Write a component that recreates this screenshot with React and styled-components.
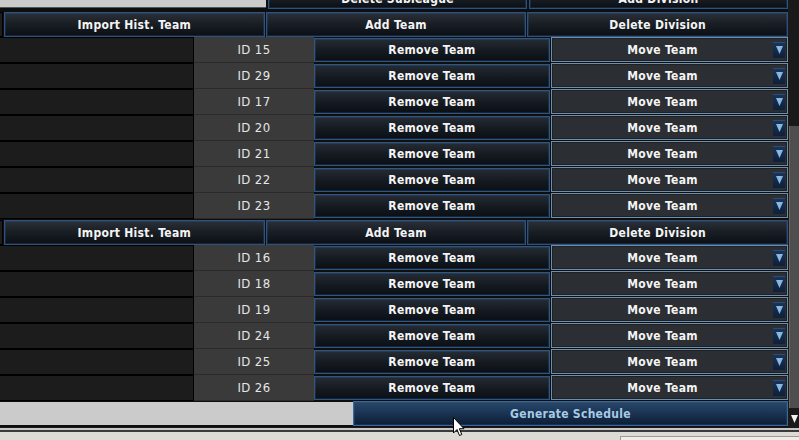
import React from 'react';
import styled, { createGlobalStyle } from 'styled-components';

const GlobalStyle = createGlobalStyle`
  html, body {
    margin: 0;
    padding: 0;
    background: #0d0e0f;
  }
  body {
    width: 799px;
    height: 440px;
    overflow: hidden;
    font-family: "DejaVu Sans Condensed", "DejaVu Sans", sans-serif;
    font-stretch: condensed;
  }
`;

const Window = styled.div`
  position: relative;
  width: 799px;
  height: 440px;
  display: flex;
  flex-direction: column;
  overflow: hidden;
`;

const Pane = styled.div`
  display: flex;
  height: 427px;
  flex-shrink: 0;
`;

// content is scrolled to the bottom, so the top overflows out of view
const Viewport = styled.div`
  width: 788px;
  display: flex;
  flex-direction: column;
  justify-content: flex-end;
  overflow: hidden;
  background: #0d0e0f;
  & > * {
    flex-shrink: 0;
  }
`;

const TopRow = styled.div`
  display: grid;
  grid-template-columns: 266px 1fr 1fr;
  column-gap: 2px;
  height: 20px;
  margin-bottom: 2px;
`;

const GrayFill = styled.div`
  background: #cbcbcb;
  border-bottom: 1px solid #555;
  margin-bottom: 1px;
`;

const HeaderRow = styled.div`
  display: grid;
  grid-template-columns: 3px 1fr 1fr 1fr;
  column-gap: 1px;
  height: 25px;
  margin-top: 1px;
`;

const Stub = styled.div`
  background: #1c1d1c;
  border: 1px solid #000;
  border-left: none;
`;

const Button = styled.div`
  display: flex;
  align-items: center;
  justify-content: center;
  box-sizing: border-box;
  border: 1px solid #2c5282;
  box-shadow: inset 0 0 0 1px rgba(60, 100, 150, 0.25);
  background: linear-gradient(to bottom, #2b3038 0%, #1a1f26 45%, #0a0f16 100%);
  color: #f4f4f4;
  font-size: 12px;
  font-weight: bold;
  letter-spacing: 0.3px;
  white-space: nowrap;
`;

const TeamRow = styled.div`
  display: grid;
  grid-template-columns: 194px 120px 236px 1fr;
  height: 26px;
`;

const NameBox = styled.div`
  background: #1b1c1b;
  border: 1px solid #000;
  border-left: none;
`;

const IdCell = styled.div`
  display: flex;
  align-items: center;
  justify-content: center;
  background: #3a3a3b;
  border-bottom: 1px solid #2a2a2b;
  color: #e6e6e6;
  font-size: 13px;
  letter-spacing: 0.4px;
`;

const RowButton = styled(Button)`
  margin: 1px 0 1px;
  border-color: #2f5680;
  background: linear-gradient(to bottom, #262c34 0%, #161b22 50%, #0a0e15 100%);
`;

const Select = styled.div`
  display: flex;
  align-items: center;
  margin: 0 0 1px 1px;
  box-sizing: border-box;
  border: 1px solid #6e8ea9;
  box-shadow: inset 0 0 0 1px #1d2024;
  background: #2b2e32;
  color: #f4f4f4;
  font-size: 12px;
  font-weight: bold;
  letter-spacing: 0.3px;
`;

const SelectLabel = styled.span`
  flex: 1;
  text-align: center;
`;

const ArrowBox = styled.span`
  display: flex;
  align-items: center;
  justify-content: center;
  box-sizing: border-box;
  width: 12px;
  height: 16px;
  margin-right: 2px;
  border-top: 1px solid #2a4c78;
  background: linear-gradient(to bottom, #1a3456, #0e1f3a);
`;

const GenerateRow = styled.div`
  display: grid;
  grid-template-columns: 353px 1fr;
  height: 26px;
`;

const GrayTail = styled.div`
  background: #cbcbcb;
  margin: 1px 0 2px;
`;

const GenerateButton = styled(Button)`
  margin-bottom: 1px;
  border-color: #3a6898;
  background: linear-gradient(to bottom, #28486b 0%, #1a3352 50%, #0c1d35 100%);
  color: #a7cbe3;
`;

const ScrollBar = styled.div`
  width: 11px;
  display: flex;
  flex-direction: column;
  background: #1a1a1a;
  padding-left: 1px;
  box-sizing: border-box;
`;

const ScrollTrack = styled.div`
  height: 126px;
`;

const ScrollThumb = styled.div`
  flex: 1;
  background: #4e4e4e;
  border-left: 1px solid #676767;
`;

const ScrollArrow = styled.div`
  height: 17px;
  display: flex;
  align-items: center;
  justify-content: center;
  padding-top: 2px;
`;

const BottomBar = styled.div`
  flex: 1;
  background: linear-gradient(to bottom, #1a1a1a 0 1px, #c6c6c6 1px 3px, #3a3a3a 3px 5px, #dcdad5 5px);
`;

const Field = styled.div`
  margin: 9px 0 0 620px;
  height: 10px;
  border-top: 1px solid #9c9a96;
  border-left: 1px solid #9c9a96;
  background: #eeece9;
`;

const Cursor = styled.svg`
  position: absolute;
  left: 453px;
  top: 417px;
`;

const DownArrow = ({ color = '#86b8e2' }) => (
  <svg width="7" height="8" viewBox="0 0 7 8">
    <path d="M0 0 H7 L3.5 8 Z" fill={color} />
  </svg>
);

const division1 = [15, 29, 17, 20, 21, 22, 23];
const division2 = [16, 18, 19, 24, 25, 26];

function DivisionHeader() {
  return (
    <HeaderRow>
      <Stub />
      <Button>Import Hist. Team</Button>
      <Button>Add Team</Button>
      <Button>Delete Division</Button>
    </HeaderRow>
  );
}

function Team({ id }) {
  return (
    <TeamRow>
      <NameBox />
      <IdCell>ID {id}</IdCell>
      <RowButton>Remove Team</RowButton>
      <Select>
        <SelectLabel>Move Team</SelectLabel>
        <ArrowBox>
          <DownArrow />
        </ArrowBox>
      </Select>
    </TeamRow>
  );
}

export default function App() {
  return (
    <Window>
      <GlobalStyle />
      <Pane>
        <Viewport>
          <TopRow>
            <GrayFill />
            <Button>Delete Subleague</Button>
            <Button>Add Division</Button>
          </TopRow>
          <DivisionHeader />
          {division1.map((id) => (
            <Team key={id} id={id} />
          ))}
          <DivisionHeader />
          {division2.map((id) => (
            <Team key={id} id={id} />
          ))}
          <GenerateRow>
            <GrayTail />
            <GenerateButton>Generate Schedule</GenerateButton>
          </GenerateRow>
        </Viewport>
        <ScrollBar>
          <ScrollTrack />
          <ScrollThumb />
          <ScrollArrow>
            <DownArrow color="#f2f2f2" />
          </ScrollArrow>
        </ScrollBar>
      </Pane>
      <BottomBar>
        <Field />
      </BottomBar>
      <Cursor width="12" height="20" viewBox="0 0 12 20">
        <path d="M0.5 0.5 L0.5 16 L4 12.5 L6.5 18.5 L8.8 17.5 L6.3 11.7 L11 11.7 Z" fill="#fff" stroke="#000" strokeWidth="1" />
      </Cursor>
    </Window>
  );
}
